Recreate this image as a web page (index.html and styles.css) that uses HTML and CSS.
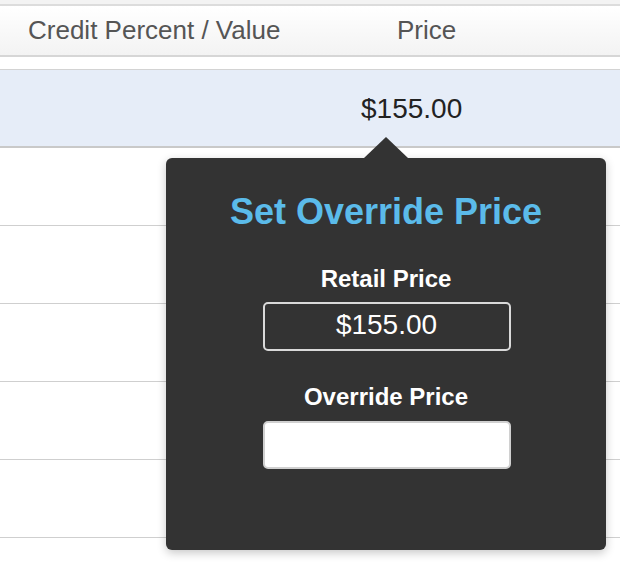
FILE: index.html
```html
<!DOCTYPE html>
<html lang="en">
<head>
<meta charset="utf-8">
<title>Set Override Price</title>
<link rel="stylesheet" href="styles.css">
</head>
<body>
<div class="page">
  <div class="top-strip"></div>
  <div class="thead">
    <div class="th col-credit">Credit Percent / Value</div>
    <div class="th col-price">Price</div>
  </div>
  <div class="spacer"></div>
  <div class="row selected">
    <div class="td col-credit"></div>
    <div class="td col-price">$155.00</div>
  </div>
  <div class="row"></div>
  <div class="row"></div>
  <div class="row"></div>
  <div class="row"></div>
  <div class="row"></div>

  <div class="popover">
    <h3 class="popover-title">Set Override Price</h3>
    <label class="field-label" for="retail">Retail Price</label>
    <input class="field retail" id="retail" type="text" value="$155.00" readonly>
    <label class="field-label override-label" for="override">Override Price</label>
    <input class="field override" id="override" type="text" value="">
  </div>
</div>
</body>
</html>
```

FILE: styles.css
```css
* { box-sizing: border-box; }

html, body {
  margin: 0;
  padding: 0;
  background: #ffffff;
  font-family: "Liberation Sans", Arial, Helvetica, sans-serif;
}

.page {
  position: relative;
  width: 620px;
  height: 562px;
  overflow: hidden;
}

.top-strip {
  height: 4px;
  background: #f3f3f3;
}

.thead {
  display: grid;
  grid-template-columns: 361px 1fr;
  height: 53px;
  border-top: 2px solid #dcdcdc;
  border-bottom: 2px solid #d6d6d6;
  background: linear-gradient(#ffffff, #f3f3f3);
}

.th {
  padding-top: 9px;
  font-size: 26px;
  line-height: 30px;
  color: #555555;
  font-weight: normal;
}

.th.col-credit { padding-left: 28px; }
.th.col-price { padding-left: 36px; }

.spacer {
  height: 12px;
}

.row {
  height: 78px;
  border-bottom: 1px solid #cfcfcf;
}

.row.selected {
  display: grid;
  grid-template-columns: 361px 1fr;
  height: 79px;
  border-top: 1px solid #d3d3d3;
  border-bottom: 2px solid #c9c9c9;
  background: #e6edf8;
}

.td {
  padding-top: 23px;
  font-size: 28px;
  line-height: 32px;
  color: #222222;
}

.popover {
  position: absolute;
  left: 166px;
  top: 158px;
  width: 440px;
  height: 392px;
  padding-top: 34px;
  display: flex;
  flex-direction: column;
  align-items: center;
  background: #333333;
  border-radius: 6px;
  box-shadow: 0 3px 10px rgba(0, 0, 0, 0.22);
}

.popover::before {
  content: "";
  position: absolute;
  top: -21px;
  left: 198px;
  border-left: 22px solid transparent;
  border-right: 22px solid transparent;
  border-bottom: 21px solid #333333;
}

.popover-title {
  margin: 0;
  font-size: 36px;
  line-height: 40px;
  font-weight: bold;
  color: #5bbbea;
}

.field-label {
  display: block;
  margin-top: 33px;
  font-size: 24px;
  line-height: 28px;
  font-weight: bold;
  color: #ffffff;
}

.override-label {
  margin-top: 32px;
}

.field {
  display: block;
  margin: 9px 0 0 1px;
  width: 248px;
  height: 49px;
  padding: 0 0 4px 0;
  border: 2px solid #d9d9d9;
  border-radius: 5px;
  font-family: "Liberation Sans", Arial, Helvetica, sans-serif;
  font-size: 28px;
  text-align: center;
  outline: none;
}

.field.retail {
  background: transparent;
  color: #ffffff;
}

.field.override {
  height: 48px;
  margin-top: 10px;
  background: #ffffff;
  color: #222222;
  border-color: #d0d0d0;
}
```
